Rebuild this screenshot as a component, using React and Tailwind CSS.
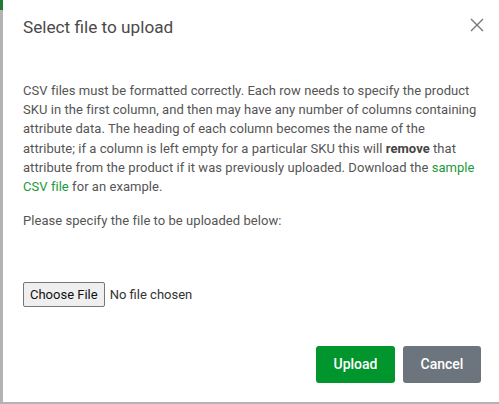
import React from "react";

export default function App() {
  return (
    <div className="w-[499px] h-[404px] bg-[#b3b3b3] flex overflow-hidden" style={{ fontFamily: "Roboto, 'Liberation Sans', sans-serif" }}>
      <div className="w-[3px] flex flex-col shrink-0">
        <div className="h-[10px] bg-[#1e7a34]" />
      </div>
      <div className="flex-1 h-[402px] bg-white flex flex-col">
        <div className="flex items-start justify-between pl-[20px] pr-[14px] pt-[16px] h-[66px]">
          <h1 className="text-[17.2px] leading-[22px] text-[#4a4a4a] font-normal">Select file to upload</h1>
          <button className="mt-[1px] text-[#777]" aria-label="Close">
            <svg width="16" height="16" viewBox="0 0 16 16" fill="none" stroke="currentColor" strokeWidth="1.4">
              <path d="M2 2 L14 14 M14 2 L2 14" />
            </svg>
          </button>
        </div>
        <div className="pl-[20px] pr-[8px] pt-[15px] text-[13px] tracking-[0.05px] leading-[19.2px] text-[#555]">
          <p>
            CSV files must be formatted correctly. Each row needs to specify the product<br />
            SKU in the first column, and then may have any number of columns containing<br />
            attribute data. The heading of each column becomes the name of the<br />
            attribute; if a column is left empty for a particular SKU this will <b className="font-bold text-[#444]">remove</b> that<br />
            attribute from the product if it was previously uploaded. Download the <a className="text-[#1a9a3a]" href="#">sample<br />
            CSV file</a> for an example.
          </p>
          <p className="mt-[15px]">Please specify the file to be uploaded below:</p>
          <div className="mt-[52px] flex items-center">
            <input
              type="file"
              className="text-[13px] tracking-normal text-[#333] file:h-[25px] file:px-[6px] file:mr-[5px] file:border file:border-[#767676] file:rounded-[2px] file:bg-[#efefef] file:text-[#111]"
            />
          </div>
        </div>
        <div className="flex-1" />
        <div className="flex justify-end gap-[8px] pr-[18px] pb-[19px]">
          <button className="w-[79px] h-[37px] rounded-[3px] bg-[#00952d] text-white text-[14px] font-medium">Upload</button>
          <button className="w-[78px] h-[37px] rounded-[3px] bg-[#6c757d] text-white text-[14px] font-medium">Cancel</button>
        </div>
      </div>
    </div>
  );
}
